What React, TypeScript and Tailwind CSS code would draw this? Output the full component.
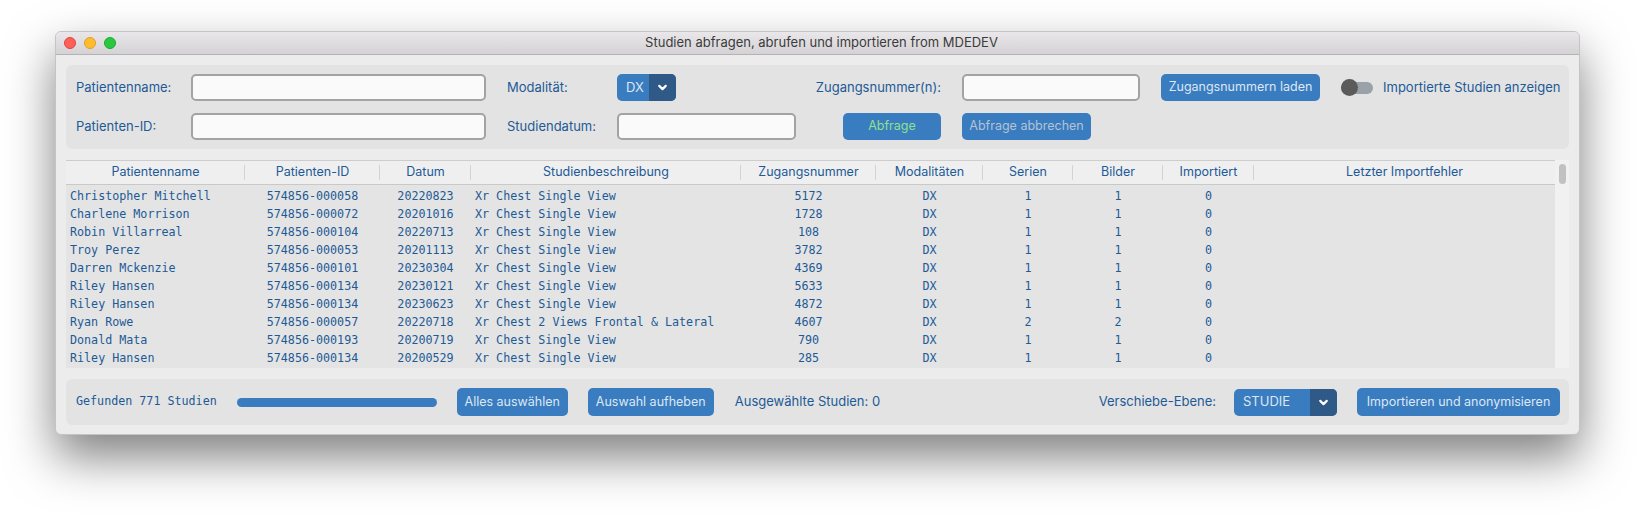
import { ChevronDown } from 'lucide-react';

const rows = [
  ['Christopher Mitchell', '574856-000058', '20220823', 'Xr Chest Single View', '5172', 'DX', '1', '1', '0'],
  ['Charlene Morrison', '574856-000072', '20201016', 'Xr Chest Single View', '1728', 'DX', '1', '1', '0'],
  ['Robin Villarreal', '574856-000104', '20220713', 'Xr Chest Single View', '108', 'DX', '1', '1', '0'],
  ['Troy Perez', '574856-000053', '20201113', 'Xr Chest Single View', '3782', 'DX', '1', '1', '0'],
  ['Darren Mckenzie', '574856-000101', '20230304', 'Xr Chest Single View', '4369', 'DX', '1', '1', '0'],
  ['Riley Hansen', '574856-000134', '20230121', 'Xr Chest Single View', '5633', 'DX', '1', '1', '0'],
  ['Riley Hansen', '574856-000134', '20230623', 'Xr Chest Single View', '4872', 'DX', '1', '1', '0'],
  ['Ryan Rowe', '574856-000057', '20220718', 'Xr Chest 2 Views Frontal & Lateral', '4607', 'DX', '2', '2', '0'],
  ['Donald Mata', '574856-000193', '20200719', 'Xr Chest Single View', '790', 'DX', '1', '1', '0'],
  ['Riley Hansen', '574856-000134', '20200529', 'Xr Chest Single View', '285', 'DX', '1', '1', '0'],
];

const headers = [
  'Patientenname', 'Patienten-ID', 'Datum', 'Studienbeschreibung', 'Zugangsnummer',
  'Modalitäten', 'Serien', 'Bilder', 'Importiert', 'Letzter Importfehler',
];

const cols = 'grid grid-cols-[179px_135px_91px_270px_135px_107px_90px_90px_91px_1fr]';
const ui = "font-['Inter','Liberation_Sans',sans-serif]";
const mono = "font-['DejaVu_Sans_Mono','Liberation_Mono',monospace]";

function Input({ w }: { w: string }) {
  return <div className={`${w} h-[27px] rounded-[5px] border-2 border-[#a3a3a3] bg-[#fafafa]`} />;
}

function Btn({ children, className = '' }: { children: React.ReactNode; className?: string }) {
  return (
    <div className={`h-[27px] rounded-[5px] bg-[#3a7cc0] flex items-center justify-center text-[12.5px] ${className}`}>
      {children}
    </div>
  );
}

function Select({ value, w }: { value: string; w: string }) {
  return (
    <div className={`${w} h-[27px] rounded-[5px] bg-[#3a7cc0] flex overflow-hidden`}>
      <div className="flex-1 flex items-center pl-[9px] text-[13px] text-[#dce7f3]">{value}</div>
      <div className="w-[27px] bg-[#2f5a87] flex items-center justify-center text-white">
        <ChevronDown size={13} strokeWidth={4} />
      </div>
    </div>
  );
}

export default function App() {
  return (
    <div className={`min-h-screen bg-white pt-[31px] pl-[55px] ${ui}`}>
      <div className="w-[1525px] h-[404px] rounded-[6px] bg-[#ececec] border border-[#c4c4c4] shadow-[0_22px_48px_rgba(0,0,0,0.5)] flex flex-col overflow-hidden">
        {/* title bar */}
        <div className="h-[23px] shrink-0 bg-gradient-to-b from-[#e9e7e9] to-[#d4d2d4] border-b border-[#b3b3b3] flex items-center">
          <div className="flex gap-[8px] pl-[8px]">
            <span className="w-[12px] h-[12px] rounded-full bg-[#fe5f57] border border-[#e0443e]" />
            <span className="w-[12px] h-[12px] rounded-full bg-[#febc2e] border border-[#dea123]" />
            <span className="w-[12px] h-[12px] rounded-full bg-[#28c840] border border-[#1aab29]" />
          </div>
          <div className="flex-1 text-center text-[13px] text-[#3b3b3b] pr-[52px]">
            Studien abfragen, abrufen und importieren from MDEDEV
          </div>
        </div>

        <div className="flex-1 flex flex-col px-[10px] pt-[10px] pb-[9px] gap-[11px]">
          {/* query panel */}
          <div className="rounded-[6px] bg-[#e3e3e3] pl-[10px] py-[9px] grid grid-cols-[94px_295px_89px_179px_124px_178px_159px_auto] gap-x-[21px] gap-y-[12px] items-center text-[13px] text-[#1d5a96]">
            <span>Patientenname:</span>
            <Input w="w-[295px]" />
            <span>Modalität:</span>
            <Select value="DX" w="w-[59px]" />
            <span className="justify-self-end">Zugangsnummer(n):</span>
            <Input w="w-[178px]" />
            <Btn className="w-[159px] text-[#dce7f3]">Zugangsnummern laden</Btn>
            <div className="flex items-center gap-[10px]">
              <div className="relative w-[32px] h-[17px] flex items-center">
                <div className="w-[32px] h-[12px] rounded-full bg-[#9aa1a9]" />
                <div className="absolute left-0 top-0 w-[17px] h-[17px] rounded-full bg-[#5b5b5b]" />
              </div>
              <span>Importierte Studien anzeigen</span>
            </div>

            <span>Patienten-ID:</span>
            <Input w="w-[295px]" />
            <span>Studiendatum:</span>
            <Input w="w-[179px]" />
            <Btn className="w-[98px] justify-self-end text-[#8fe08d]">Abfrage</Btn>
            <Btn className="w-[129px] text-[#b3c3d4]">Abfrage abbrechen</Btn>
            <span />
            <span />
          </div>

          {/* table */}
          <div className="flex h-[208px]">
            <div className="flex-1 flex flex-col bg-[#e4e4e4]">
              <div className={`${cols} h-[26px] bg-[#efefef] border-t border-[#cdcdcd] border-b border-b-[#c9c9c9] text-[12.5px] text-[#1d5a96]`}>
                {headers.map((h, i) => (
                  <div key={h} className="flex items-center justify-center relative">
                    {h}
                    {i < headers.length - 1 && (
                      <span className="absolute right-0 top-[4px] bottom-[4px] w-px bg-[#d3d3d3]" />
                    )}
                  </div>
                ))}
              </div>
              <div className={`pt-[3px] ${mono} text-[11.7px] text-[#1d5a96]`}>
                {rows.map((r, ri) => (
                  <div key={ri} className={`${cols} h-[18px] items-center`}>
                    {r.map((c, ci) => (
                      <div
                        key={ci}
                        className={ci === 0 || ci === 3 ? 'pl-[4px] whitespace-nowrap' : 'text-center whitespace-nowrap'}
                      >
                        {c}
                      </div>
                    ))}
                    <div />
                  </div>
                ))}
              </div>
            </div>
            <div className="w-[14px] bg-[#f1f1f1] pt-[4px] flex justify-center">
              <div className="w-[7px] h-[20px] rounded-full bg-[#c1c1c1]" />
            </div>
          </div>

          {/* bottom panel */}
          <div className="rounded-[6px] bg-[#e3e3e3] h-[46px] pl-[10px] pr-[9px] flex items-center text-[13px] text-[#1d5a96]">
            <span className={`${mono} text-[11.7px]`}>Gefunden 771 Studien</span>
            <div className="ml-[20px] w-[200px] h-[9px] rounded-full bg-[#3a7cc0]" />
            <Btn className="ml-[20px] w-[111px] h-[28px] text-[#dce7f3]">Alles auswählen</Btn>
            <Btn className="ml-[20px] w-[126px] h-[28px] text-[#dce7f3]">Auswahl aufheben</Btn>
            <span className="ml-[21px]">Ausgewählte Studien: 0</span>
            <span className="ml-auto">Verschiebe-Ebene:</span>
            <div className="ml-[18px]">
              <Select value="STUDIE" w="w-[103px]" />
            </div>
            <Btn className="ml-[20px] w-[203px] h-[28px] text-[#dce7f3]">Importieren und anonymisieren</Btn>
          </div>
        </div>
      </div>
    </div>
  );
}
